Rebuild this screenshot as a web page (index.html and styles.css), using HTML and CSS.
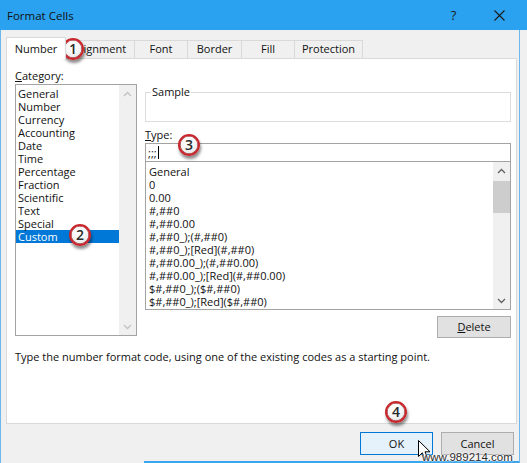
FILE: index.html
```html
<!DOCTYPE html>
<html>
<head>
<meta charset="utf-8">
<title>Format Cells</title>
<link rel="stylesheet" href="styles.css">
</head>
<body>
<div class="titlebar">
  <span class="title">Format Cells</span>
  <span class="tb-btn tb-help">?</span>
  <span class="tb-btn tb-close"><svg width="11" height="11" viewBox="0 0 11 11"><path d="M0.5 0.5 L10.5 10.5 M10.5 0.5 L0.5 10.5" stroke="#1a1a1a" stroke-width="1.1" fill="none"/></svg></span>
  <span class="tb-end"></span>
</div>
<div class="window">
  <div class="tabs">
    <div class="tab active t-number">Number</div>
    <div class="tab t-align">Alignment</div>
    <div class="tab t-font">Font</div>
    <div class="tab t-border">Border</div>
    <div class="tab t-fill">Fill</div>
    <div class="tab t-prot">Protection</div>
  </div>
  <div class="panel">
    <div class="columns">
      <div class="catcol">
        <div class="label"><u>C</u>ategory:</div>
        <div class="listbox cat">
          <ul class="items">
            <li>General</li>
            <li>Number</li>
            <li>Currency</li>
            <li>Accounting</li>
            <li>Date</li>
            <li>Time</li>
            <li>Percentage</li>
            <li>Fraction</li>
            <li>Scientific</li>
            <li>Text</li>
            <li>Special</li>
            <li class="selected">Custom</li>
          </ul>
          <div class="vscroll disabled">
            <div class="arrow"><svg width="9" height="6" viewBox="0 0 9 6"><path d="M1 5 L4.5 1.5 L8 5" stroke="#c2c2c2" stroke-width="1.3" fill="none"/></svg></div>
            <div class="track"></div>
            <div class="arrow"><svg width="9" height="6" viewBox="0 0 9 6"><path d="M1 1 L4.5 4.5 L8 1" stroke="#c2c2c2" stroke-width="1.3" fill="none"/></svg></div>
          </div>
        </div>
      </div>
      <div class="rightcol">
        <div class="sample"><span class="sample-label">Sample</span></div>
        <div class="label type-label"><u>T</u>ype:</div>
        <div class="input">;;;<span class="caret"></span></div>
        <div class="listbox types">
          <ul class="items">
            <li>General</li>
            <li>0</li>
            <li>0.00</li>
            <li>#,##0</li>
            <li>#,##0.00</li>
            <li>#,##0_);(#,##0)</li>
            <li>#,##0_);[Red](#,##0)</li>
            <li>#,##0.00_);(#,##0.00)</li>
            <li>#,##0.00_);[Red](#,##0.00)</li>
            <li>$#,##0_);($#,##0)</li>
            <li>$#,##0_);[Red]($#,##0)</li>
          </ul>
          <div class="vscroll">
            <div class="arrow"><svg width="9" height="6" viewBox="0 0 9 6"><path d="M1 5 L4.5 1.5 L8 5" stroke="#606060" stroke-width="1.3" fill="none"/></svg></div>
            <div class="track"><div class="thumb"></div></div>
            <div class="arrow"><svg width="9" height="6" viewBox="0 0 9 6"><path d="M1 1 L4.5 4.5 L8 1" stroke="#606060" stroke-width="1.3" fill="none"/></svg></div>
          </div>
        </div>
        <div class="delete-row"><button class="btn delete"><u>D</u>elete</button></div>
      </div>
    </div>
    <p class="desc">Type the number format code, using one of the existing codes as a starting point.</p>
  </div>
  <div class="footer">
    <button class="btn ok">OK</button>
    <button class="btn cancel">Cancel</button>
  </div>
  <div class="bottom-accent"></div>
</div>

<div class="badge b1">1</div>
<div class="badge b2">2</div>
<div class="badge b3">3</div>
<div class="badge b4">4</div>

<svg class="cursor" width="13" height="21" viewBox="0 0 13 21"><path d="M0.5 0.5 L0.5 16.5 L4.3 12.8 L7 19.5 L9.6 18.4 L7 11.8 L12 11.8 Z" fill="#fff" stroke="#000" stroke-width="1" stroke-linejoin="miter"/></svg>
<div class="watermark">www.989214.com</div>
</body>
</html>
```
FILE: styles.css
```css
* { box-sizing: border-box; }
html, body { margin: 0; padding: 0; }
body {
  width: 527px;
  height: 463px;
  overflow: hidden;
  position: relative;
  background: #f0f0f0;
  font-family: "Open Sans", "Noto Sans", sans-serif;
  font-size: 11px;
  color: #000;
}
ul { list-style: none; margin: 0; padding: 0; }
u { text-decoration: underline; text-underline-offset: 1px; }

/* title bar */
.titlebar {
  height: 30px;
  background: #2ba2ef;
  display: flex;
  align-items: center;
}
.title { flex: 1; padding-left: 7px; font-size: 11.5px; color: #111; }
.tb-btn {
  width: 46px;
  height: 30px;
  display: flex;
  align-items: center;
  justify-content: center;
}
.tb-help { font-size: 13px; color: #1a1a1a; padding-left: 1px; }
.tb-end { width: 5px; }

/* window body */
.window {
  width: 520px;
  height: 433px;
  border-left: 1px solid #6ab8ee;
  border-right: 1px solid #6ab8ee;
  display: flex;
  flex-direction: column;
}

/* tabs */
.tabs {
  height: 28px;
  display: flex;
  align-items: flex-end;
  padding-left: 5px;
}
.tab {
  height: 18px;
  border: 1px solid #d9d9d9;
  border-left: none;
  border-bottom: none;
  background: #f0f0f0;
  text-align: center;
  line-height: 16px;
  color: #111;
}
.tab.active {
  height: 22px;
  margin-bottom: -1px;
  padding-top: 3px;
  background: #fff;
  border-left: 1px solid #d9d9d9;
  position: relative;
  z-index: 1;
}
.t-number { width: 60px; }
.t-align { width: 69px; }
.t-font { width: 53px; }
.t-border { width: 54px; }
.t-fill { width: 53px; }
.t-prot { width: 68px; }

/* panel */
.panel {
  margin-left: 5px;
  width: 511px;
  height: 366px;
  border: 1px solid #d9d9d9;
  background: #fff;
  padding: 10px 0 0 8px;
}
.columns { display: flex; gap: 8px; }
.catcol { width: 122px; }
.rightcol { width: 366px; }
.label { height: 14px; line-height: 14px; color: #111; }

.listbox {
  border: 1px solid #a3a3a3;
  display: flex;
  background: #fff;
}
.listbox .items { flex: 1; line-height: 13px; color: #111; white-space: nowrap; overflow: hidden; }
.listbox .items li { height: 13px; }
.cat { margin-top: 1px; height: 252px; }
.cat .items { padding-top: 2px; }
.cat .items li { padding-left: 2px; }
.cat .items li.selected { background: #0078d7; color: #fff; }

.vscroll {
  width: 17px;
  background: #f0f0f0;
  display: flex;
  flex-direction: column;
}
.vscroll .arrow {
  height: 17px;
  display: flex;
  align-items: center;
  justify-content: center;
}
.vscroll .track { flex: 1; }
.vscroll .thumb { margin-top: 2px; height: 32px; background: #cdcdcd; }

/* right column */
.sample {
  margin-top: 23px;
  height: 30px;
  border: 1px solid #dcdcdc;
  padding-left: 5px;
}
.sample-label {
  display: block;
  width: fit-content;
  margin-top: -8px;
  padding: 0 1px;
  background: #fff;
  line-height: 14px;
  color: #111;
}
.type-label { margin-top: 6px; }
.input {
  margin-top: 1px;
  height: 19px;
  border: 1px solid #a3a3a3;
  padding-left: 2px;
  line-height: 17px;
  color: #111;
  display: flex;
  align-items: center;
}
.caret {
  display: inline-block;
  width: 1px;
  height: 13px;
  background: #000;
  margin-left: 1px;
}
.types { height: 148px; border-top: none; }
.types .items { padding-top: 3px; }
.types .items li { padding-left: 3px; }

.delete-row { margin-top: 6px; display: flex; justify-content: flex-end; }

.btn {
  font-family: "Open Sans", "Noto Sans", sans-serif;
  font-size: 11px;
  color: #111;
  background: #e1e1e1;
  border: 1px solid #adadad;
  padding: 0;
  margin: 0;
  height: 23px;
  line-height: 20px;
}
.delete { width: 74px; height: 22px; }

.desc { margin: 12px 0 0 0; line-height: 14px; color: #111; }

/* footer */
.footer {
  height: 37px;
  padding-top: 8px;
  padding-right: 5px;
  display: flex;
  justify-content: flex-end;
  align-items: flex-start;
  gap: 8px;
}
.footer .btn { width: 73px; }
.btn.ok { background: #e5f1fb; border-color: #0078d7; }
.bottom-accent { margin-left: 143px; height: 2px; background: #3aa6ee; }

/* overlays */
.badge {
  position: absolute;
  width: 22px;
  height: 22px;
  border-radius: 50%;
  border: 2.5px solid #c8262c;
  background: radial-gradient(circle at 45% 35%, #ffffff 0%, #f6f6f6 45%, #d9d9d9 100%);
  box-shadow: 1px 3px 3px rgba(0, 0, 0, 0.45), inset 0 0 0 0.5px #8a1015;
  display: flex;
  align-items: center;
  justify-content: center;
  font-family: "Open Sans", sans-serif;
  font-weight: 600;
  font-size: 14px;
  color: #2a2a2a;
  line-height: 1;
}
.b1 { left: 62px; top: 38px; }
.b2 { left: 69px; top: 224px; }
.b3 { left: 178px; top: 134px; }
.b4 { left: 385px; top: 401px; }

.cursor { position: absolute; left: 418px; top: 440px; }
.watermark {
  position: absolute;
  left: 422px;
  top: 451px;
  font-family: "Liberation Sans", Arial, sans-serif;
  font-size: 11.5px;
  line-height: 13px;
  color: #2b2b2b;
  text-shadow: 0 0 2px #fff, 0 0 2px #fff, 0 0 1px #fff;
}
```
